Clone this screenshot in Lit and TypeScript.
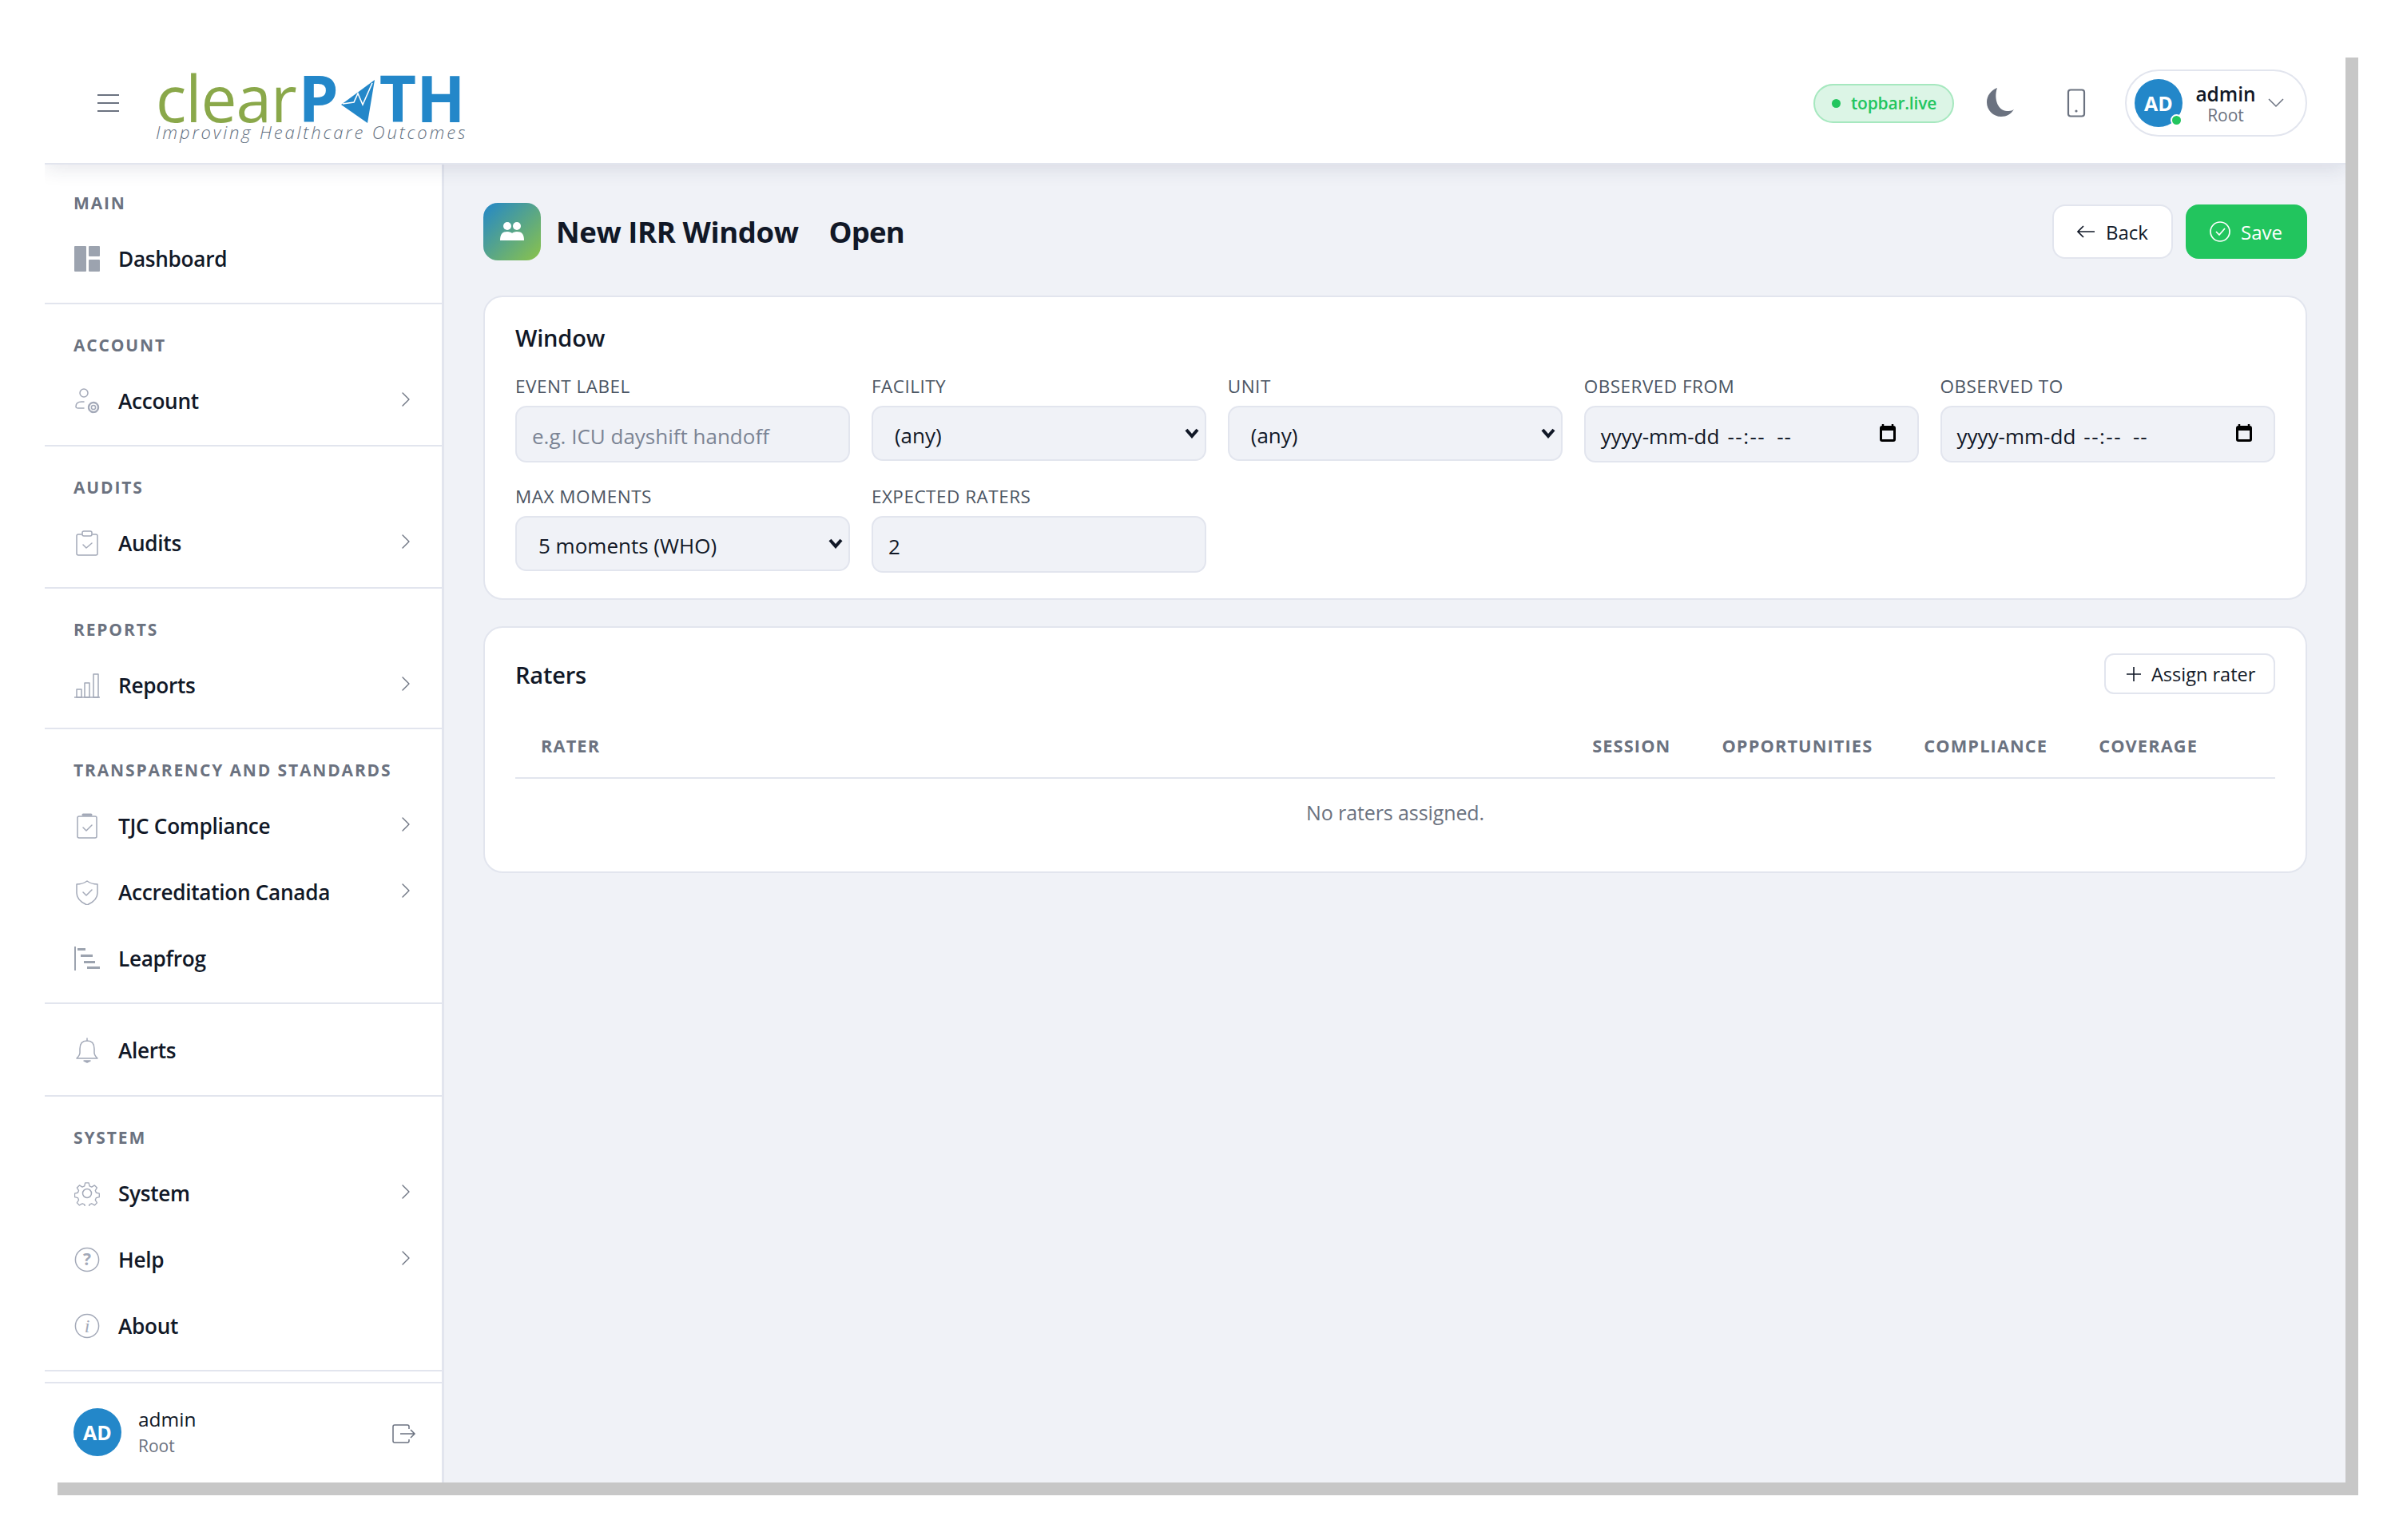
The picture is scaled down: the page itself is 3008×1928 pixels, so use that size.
import { LitElement, html, css, svg } from "lit";
import { customElement } from "lit/decorators.js";

const ico = (body: unknown, cls = "ic", vb = "0 0 32 32") =>
  html`<svg class=${cls} viewBox=${vb} fill="none" stroke="currentColor" stroke-width="1.5" stroke-linecap="round" stroke-linejoin="round">${body}</svg>`;

const icons: Record<string, unknown> = {
  dash: html`<svg class="ic" viewBox="0 0 32 32"><rect x="0" y="0" width="15" height="32" rx="1" fill="#9ca3af"/><rect x="18" y="0" width="14" height="13" rx="1" fill="#9ca3af"/><rect x="18" y="17" width="14" height="15" rx="1" fill="#9ca3af"/></svg>`,
  account: ico(svg`<circle cx="12" cy="6" r="5"/><path d="M12 17H9c-4 0-7 2-7 6 0 2 1 2 3 2h7"/><circle cx="24" cy="24" r="2.6"/><circle cx="24" cy="24" r="6" stroke-dasharray="3 1.7" stroke-width="2.4"/>`),
  audits: ico(svg`<path d="M9 5H5a2 2 0 0 0-2 2v22a2 2 0 0 0 2 2h22a2 2 0 0 0 2-2V7a2 2 0 0 0-2-2h-4"/><rect x="10" y="1" width="12" height="6" rx="2"/><path d="M11 18l4 4 7-6"/>`),
  reports: ico(svg`<path d="M0 31h32"/><rect x="3" y="21" width="6" height="10"/><rect x="13" y="13" width="6" height="18"/><rect x="24" y="2" width="6" height="29"/>`),
  tjc: ico(svg`<rect x="4" y="4" width="24" height="27" rx="2"/><path d="M11 2h10" stroke-width="3"/><path d="M11 18l4 4 7-7"/>`),
  shield: ico(svg`<path d="M16 2c4 3 9 4 13 4v11c0 7-6 12-13 15C9 29 3 24 3 17V6c4 0 9-1 13-4z"/><path d="M11 16l4 4 7-7"/>`),
  leap: html`<svg class="ic" viewBox="0 0 32 32" fill="#9ca3af"><rect x="0" y="1" width="2" height="30"/><rect x="4" y="3" width="10" height="3"/><rect x="8" y="11" width="15" height="3"/><rect x="12" y="19" width="14" height="3"/><rect x="16" y="26" width="16" height="3"/></svg>`,
  bell: ico(svg`<path d="M16 4c-6 0-9 4-9 10v5c0 3-2 5-4 7h26c-2-2-4-4-4-7v-5c0-6-3-10-9-10z"/><path d="M16 1v3"/><path d="M12 29h8l-4 2z" fill="currentColor"/>`),
  gear: ico(svg`<circle cx="16" cy="16" r="5.5"/><path d="M13.5 1.5h5l1 4.5 3 1.3 4-2.4 3.4 3.4-2.4 4 1.3 3 4.3 1v5l-4.3 1-1.3 3 2.4 4-3.4 3.4-4-2.4-3 1.2-1 4.5h-5l-1-4.5-3-1.2-4 2.4-3.4-3.4 2.4-4-1.3-3-4.3-1v-5l4.3-1 1.3-3-2.4-4 3.4-3.4 4 2.4 3-1.3z" transform="translate(1.5 1.5) scale(.9)"/>`),
  help: html`<svg class="ic" viewBox="0 0 32 32"><circle cx="16" cy="16" r="14.6" fill="none" stroke="currentColor" stroke-width="1.5"/><text x="16" y="23" text-anchor="middle" class="gl">?</text></svg>`,
  info: html`<svg class="ic" viewBox="0 0 32 32"><circle cx="16" cy="16" r="14.6" fill="none" stroke="currentColor" stroke-width="1.5"/><text x="16" y="24" text-anchor="middle" class="gl ital">i</text></svg>`,
};

const chev = html`<svg class="chev" viewBox="0 0 12 18" fill="none" stroke="currentColor" stroke-width="1.3" stroke-linecap="round" stroke-linejoin="round"><path d="M2 1l8 8-8 8"/></svg>`;

type Item = { label: string; icon: string; more?: boolean };
type Sec = { title?: string; items: Item[] };

const sections: Sec[] = [
  { title: "MAIN", items: [{ label: "Dashboard", icon: "dash" }] },
  { title: "ACCOUNT", items: [{ label: "Account", icon: "account", more: true }] },
  { title: "AUDITS", items: [{ label: "Audits", icon: "audits", more: true }] },
  { title: "REPORTS", items: [{ label: "Reports", icon: "reports", more: true }] },
  {
    title: "TRANSPARENCY AND STANDARDS",
    items: [
      { label: "TJC Compliance", icon: "tjc", more: true },
      { label: "Accreditation Canada", icon: "shield", more: true },
      { label: "Leapfrog", icon: "leap" },
    ],
  },
  { items: [{ label: "Alerts", icon: "bell" }] },
  {
    title: "SYSTEM",
    items: [
      { label: "System", icon: "gear", more: true },
      { label: "Help", icon: "help", more: true },
      { label: "About", icon: "info" },
    ],
  },
];

@customElement("app-root")
export class AppRoot extends LitElement {
  static styles = css`
    :host {
      display: block;
      height: 1928px;
      padding: 56px 0 0 56px;
      box-sizing: border-box;
      background: #fff;
      font-family: "Open Sans", "Noto Sans", sans-serif;
      color: #111827;
    }
    * { box-sizing: border-box; }
    .app {
      width: 2880px;
      height: 1800px;
      box-shadow: 16px 16px 0 #c7c7c7;
      background: #f0f2f7;
      display: flex;
      flex-direction: column;
    }
    header {
      height: 150px;
      flex: none;
      background: #fff;
      border-bottom: 2px solid #e2e5ee;
      box-shadow: 0 4px 24px rgba(30, 40, 80, 0.12);
      clip-path: inset(0 0 -40px 0);
      display: flex;
      align-items: center;
      padding: 0 48px 2px 66px;
      position: relative;
      z-index: 2;
    }
    .burger { width: 27px; height: 24px; color: #6b7280; margin-right: 46px; flex: none; }
    .logo { width: 392px; height: 100px; flex: none; display: flex; flex-direction: column; padding-top: 10px; }
    .lw { display: flex; align-items: baseline; height: 66px; padding-top: 5px; white-space: nowrap; }
    .clear { font-size: 80px; line-height: 56px; color: #8aa84a; font-weight: 400; letter-spacing: -1px; margin-right: 3px; }
    .path { font-size: 80px; line-height: 56px; color: #2387c9; font-weight: 700; }
    .plane { width: 42px; height: 54px; margin: 0 6px 0 3px; align-self: flex-end; flex: none; }
    .tag { font-size: 22px; font-style: italic; font-weight: 300; letter-spacing: 2.85px; color: #5f6e7e; line-height: 28px; white-space: nowrap; margin-top: -3px; }
    .spacer { flex: 1; }
    .pill {
      display: flex; align-items: center; height: 49px; width: 176px; padding-left: 21px; gap: 13px; flex: none;
      background: #dcf5e6; border: 2px solid #a6e8bf; border-radius: 25px;
      color: #22c55e; font-size: 21px; font-weight: 600; white-space: nowrap; letter-spacing: -0.2px;
    }
    .pill i { width: 11px; height: 11px; border-radius: 50%; background: #22c55e; flex: none; }
    .moon { width: 34px; height: 36px; margin-left: 41px; margin-top: -2px; flex: none; }
    .phone { width: 24px; height: 36px; margin-left: 66px; color: #6b7280; flex: none; }
    .user {
      margin-left: 49px; width: 228px; height: 84px; border: 2.5px solid #e2e5ee; border-radius: 42px;
      display: flex; align-items: center; padding-left: 10px; flex: none;
    }
    .av {
      width: 60px; height: 60px; border-radius: 50%; background: #2387c9; color: #fff; font-weight: 700;
      font-size: 25px; display: flex; align-items: center; justify-content: center; position: relative; flex: none;
    }
    .av b { position: absolute; right: 0; bottom: 1px; width: 15px; height: 15px; border-radius: 50%; background: #22c55e; border: 2px solid #fff; }
    .who { width: 80px; margin: 2px 0 0 14px; text-align: center; }
    .who div:first-child { font-size: 24.5px; font-weight: 600; line-height: 28px; }
    .who div:last-child { font-size: 21px; color: #6b7280; line-height: 24px; }
    .dn { width: 20px; height: 12px; margin-left: 13px; color: #6b7280; flex: none; }

    .body { flex: 1; display: flex; min-height: 0; }
    aside {
      width: 500px; flex: none; background: #fff; border-right: 3px solid #e2e5ee;
      display: flex; flex-direction: column; font-size: 26.2px;
    }
    .sec { border-bottom: 2px solid #e2e5ee; padding: 31px 0 12.5px; }
    .sec.first { padding-top: 28px; }
    .sec.plain { padding: 17.5px 0 13.5px; }
    .sec:nth-child(4) { padding-bottom: 10.5px; }
    .st {
      font-size: 21px; font-weight: 700; letter-spacing: 1.85px; color: #6b7280; line-height: 28px;
      padding-left: 36px; white-space: nowrap; margin: 6px 0 15.5px;
    }
    .it {
      height: 83px; display: flex; align-items: center; padding-left: 37px; position: relative; font-weight: 600;
    }
    .it .lab { position: relative; top: -1px; }
    .ic { width: 32px; height: 32px; color: #a3a9b8; flex: none; margin-top: -3px; }
    .gl { font: 700 21px "Open Sans", sans-serif; fill: #a3a9b8; }
    .gl.ital { font-style: italic; font-family: "Liberation Serif", serif; font-size: 24px; font-weight: 400; }
    .lab { margin-left: 23px; letter-spacing: -0.3px; }
    .chev { position: absolute; left: 446px; top: 29px; width: 12px; height: 18px; color: #6b7280; }
    .foot { margin-top: 13px; border-top: 2px solid #e2e5ee; flex: 1; display: flex; align-items: center; padding: 0 32px 2px 36px; }
    .who2 { margin-left: 21px; }
    .who2 div:first-child { font-size: 24.5px; font-weight: 500; line-height: 34px; }
    .who2 div:last-child { font-size: 21px; color: #6b7280; line-height: 32px; }
    .out { width: 30px; height: 24px; color: #6b7280; margin-left: auto; margin-top: 4px; flex: none; }

    main { flex: 1; padding: 48px 48px 0 49px; min-width: 0; }
    .phead { display: flex; align-items: center; height: 72px; }
    .badge {
      width: 72px; height: 72px; border-radius: 18px; background: linear-gradient(135deg, #2387c9, #8bc34a);
      display: flex; align-items: center; justify-content: center; flex: none;
    }
    .badge svg { width: 30px; height: 26px; }
    h1 { margin: 0 0 0 19px; font-size: 36.5px; font-weight: 700; white-space: nowrap; letter-spacing: -0.4px; }
    h1 span { margin-left: 38px; letter-spacing: -0.8px; }
    .btn {
      height: 68px; border-radius: 16px; display: flex; align-items: center; font-size: 24px; flex: none;
      border: 2.5px solid #e2e5ee; background: #fff; padding: 0 28px; gap: 13px;
    }
    .btn svg { flex: none; }
    .save { background: #22c55e; color: #fff; border-color: #22c55e; margin-left: 16px; width: 152px; }
    .back { width: 151px; }
    .card { background: #fff; border: 2.5px solid #e2e5ee; border-radius: 24px; padding: 29px 38px 32px; }
    .c1 { margin-top: 44px; height: 381px; }
    .c2 { margin-top: 33px; height: 309px; padding-top: 32px; }
    h2 { margin: 0; font-size: 29px; font-weight: 600; line-height: 44px; letter-spacing: -0.2px; }
    .c2 h2 { margin-top: 2px; }
    .grid { display: grid; grid-template-columns: repeat(5, 1fr); column-gap: 26.4px; row-gap: 28px; margin-top: 24px; }
    .f { min-width: 0; }
    .f label { display: block; font-size: 22.5px; color: #4b5563; line-height: 30px; margin-bottom: 9px; white-space: nowrap; letter-spacing: 0.5px; }
    .ctl {
      width: 100%; height: 71px; background: #f0f2f7; border: 2.5px solid #e2e5ee; border-radius: 14px;
      font: 400 26px "Open Sans", sans-serif; color: #111827; padding: 5px 19px 0; display: flex; align-items: center; justify-content: space-between;
      white-space: pre;
    }
    input.ctl::placeholder { color: #7b8494; opacity: 1; }
    .sel { position: relative; }
    select.ctl { height: 69px; padding: 5px 40px 0 27px; appearance: none; -webkit-appearance: none; }
    .sel svg { position: absolute; right: 9px; top: 28px; width: 18px; height: 13px; pointer-events: none; }
    .ctl svg { width: 20px; height: 22px; margin: -8px 8px 0 0; flex: none; }
    .dt .seg { letter-spacing: 1.5px; margin-left: 10px; }
    .dt .ap { letter-spacing: 0.8px; margin-left: 14px; }
    .chead { display: flex; align-items: center; justify-content: space-between; height: 51px; }
    .asg { height: 51px; width: 214px; padding: 0 0 0 25px; border-radius: 12px; font-size: 23.5px; gap: 12px; }
    .row { display: flex; align-items: center; height: 82px; margin-top: 24px; border-bottom: 2.5px solid #e2e5ee; padding: 0 97px 0 32px; font-size: 21.8px; font-weight: 700; color: #6b7280; letter-spacing: 1.1px; white-space: nowrap; }
    .row span:first-child { flex: 1; }
    .row span + span { margin-left: 64px; }
    .none { height: 84px; display: flex; align-items: center; justify-content: center; font-size: 25px; color: #6b7280; letter-spacing: -0.1px; }
  `;

  render() {
    const cal = html`<svg viewBox="0 0 20 22"><path d="M4 0v3M16 0v3" stroke="#000" stroke-width="2.5"/><rect x="1.5" y="3.5" width="17" height="17" rx="1.5" fill="none" stroke="#000" stroke-width="3"/><rect x="1.5" y="3" width="17" height="5" fill="#000"/></svg>`;
    const arrow = html`<svg viewBox="0 0 18 13" fill="none" stroke="#111827" stroke-width="4"><path d="M2 2l7 8 7-8"/></svg>`;
    const sel = (t: string) => html`<div class="sel"><select class="ctl"><option>${t}</option></select>${arrow}</div>`;
    const date = html`<div class="ctl dt"><span>yyyy-mm-dd<span class="seg">--:--</span><span class="ap">--</span></span>${cal}</div>`;
    return html`
      <div class="app">
        <header>
          <svg class="burger" viewBox="0 0 27 24" fill="none" stroke="currentColor" stroke-width="2"><path d="M0 2h27M0 12h27M0 22h27"/></svg>
          <div class="logo">
            <div class="lw">
              <span class="clear">clear</span><span class="path">P</span>
              <svg class="plane" viewBox="0 0 42 54"><path d="M42 0 L0 31 L33 54 Z" fill="#2387c9"/><path d="M2 30 L16 28 L21 17 L27 31 L39 4" fill="none" stroke="#fff" stroke-width="1.6"/></svg>
              <span class="path">TH</span>
            </div>
            <div class="tag">Improving Healthcare Outcomes</div>
          </div>
          <div class="spacer"></div>
          <div class="pill"><i></i>topbar.live</div>
          <svg class="moon" viewBox="0 0 34 36"><path d="M13 0C5 3 0 10 0 18c0 10 8 18 18 18 7 0 12-3 16-9-3 2-6 2-9 2C15 29 8 15 13 0z" fill="#6b7280"/></svg>
          <svg class="phone" viewBox="0 0 24 36" fill="none" stroke="currentColor" stroke-width="2.2"><rect x="2" y="1.5" width="20" height="33" rx="3"/><circle cx="12" cy="28" r="1.6" fill="currentColor" stroke="none"/></svg>
          <div class="user">
            <div class="av">AD<b></b></div>
            <div class="who"><div>admin</div><div>Root</div></div>
            <svg class="dn" viewBox="0 0 20 12" fill="none" stroke="currentColor" stroke-width="1.5"><path d="M1 1l9 9 9-9"/></svg>
          </div>
        </header>
        <div class="body">
          <aside>
            ${sections.map(
              (s, i) => html`<div class="sec ${i === 0 ? "first" : ""} ${s.title ? "" : "plain"}">
                ${s.title ? html`<div class="st">${s.title}</div>` : ""}
                ${s.items.map(
                  (it) => html`<div class="it">${icons[it.icon]}<span class="lab">${it.label}</span>${it.more ? chev : ""}</div>`
                )}
              </div>`
            )}
            <div class="foot">
              <div class="av">AD</div>
              <div class="who2"><div>admin</div><div>Root</div></div>
              <svg class="out" viewBox="0 0 30 24" fill="none" stroke="currentColor" stroke-width="1.5"><path d="M21 6V3a2 2 0 0 0-2-2H3a2 2 0 0 0-2 2v18a2 2 0 0 0 2 2h16a2 2 0 0 0 2-2v-2"/><path d="M10 12h18M23 7l5 5-5 5"/></svg>
            </div>
          </aside>
          <main>
            <div class="phead">
              <div class="badge"><svg viewBox="0 0 30 26" fill="#fff"><circle cx="9" cy="6" r="5"/><circle cx="21" cy="6" r="5"/><path d="M0 24c0-8 3-11 9-11 3 0 5 1 6 2 1-1 3-2 6-2 6 0 9 3 9 11z"/></svg></div>
              <h1>New IRR Window<span>Open</span></h1>
              <div class="spacer"></div>
              <div class="btn back"><svg width="24" height="18" viewBox="0 0 24 18" fill="none" stroke="currentColor" stroke-width="1.7"><path d="M23 9H2M9 2L2 9l7 7"/></svg>Back</div>
              <div class="btn save"><svg width="26" height="26" viewBox="0 0 26 26" fill="none" stroke="#fff" stroke-width="1.7"><circle cx="13" cy="13" r="12"/><path d="M8 13l4 4 7-8"/></svg>Save</div>
            </div>
            <div class="card c1">
              <h2>Window</h2>
              <div class="grid">
                <div class="f"><label>EVENT LABEL</label><input class="ctl" placeholder="e.g. ICU dayshift handoff"/></div>
                <div class="f"><label>FACILITY</label>${sel("(any)")}</div>
                <div class="f"><label>UNIT</label>${sel("(any)")}</div>
                <div class="f"><label>OBSERVED FROM</label>${date}</div>
                <div class="f"><label>OBSERVED TO</label>${date}</div>
                <div class="f"><label>MAX MOMENTS</label>${sel("5 moments (WHO)")}</div>
                <div class="f"><label>EXPECTED RATERS</label><input class="ctl" value="2"/></div>
              </div>
            </div>
            <div class="card c2">
              <div class="chead">
                <h2>Raters</h2>
                <div class="btn asg"><svg width="20" height="20" viewBox="0 0 20 20" fill="none" stroke="currentColor" stroke-width="1.6"><path d="M10 1v18M1 10h18"/></svg>Assign rater</div>
              </div>
              <div class="row"><span>RATER</span><span>SESSION</span><span>OPPORTUNITIES</span><span>COMPLIANCE</span><span>COVERAGE</span></div>
              <div class="none">No raters assigned.</div>
            </div>
          </main>
        </div>
      </div>
    `;
  }
}
